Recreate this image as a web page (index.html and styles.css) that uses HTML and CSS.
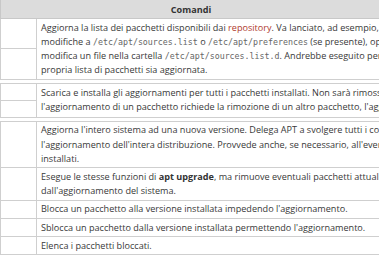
FILE: index.html
```html
<!DOCTYPE html>
<html lang="it">
<head>
<meta charset="utf-8">
<link rel="stylesheet" href="styles.css">
</head>
<body>
<table class="cmds">
  <colgroup><col class="c-cmd"><col class="c-desc"></colgroup>
  <tr><th colspan="2">Comandi</th></tr>
  <tr><td class="cmd"></td><td class="desc" rowspan="2">Aggiorna la lista dei pacchetti disponibili dai <a href="#">repository</a>. Va lanciato, ad esempio, dopo aver apportato<br>modifiche a <code>/etc/apt/sources.list</code> o <code>/etc/apt/preferences</code> (se presente), oppure dopo aver aggiunto o<br>modifica un file nella cartella <code>/etc/apt/sources.list.d</code>. Andrebbe eseguito periodicamente per far sì che la<br>propria lista di pacchetti sia aggiornata.</td></tr>
  <tr><td class="cmd"></td></tr>
  <tr class="gap"><td colspan="2"></td></tr>
  <tr><td class="cmd tall"></td><td class="desc" rowspan="2">Scarica e installa gli aggiornamenti per tutti i pacchetti installati. Non sarà rimosso alcun pacchetto: se<br>l'aggiornamento di un pacchetto richiede la rimozione di un altro pacchetto, l'aggiornamento non sarà eseguito.</td></tr>
  <tr><td class="cmd tall"></td></tr>
  <tr class="gap"><td colspan="2"></td></tr>
  <tr><td class="cmd"></td><td class="desc">Aggiorna l'intero sistema ad una nuova versione. Delega APT a svolgere tutti i compiti necessari per<br>l'aggiornamento dell'intera distribuzione. Provvede anche, se necessario, all'eventuale rimozione di pacchetti<br>installati.</td></tr>
  <tr><td class="cmd"></td><td class="desc">Esegue le stesse funzioni di <b>apt upgrade</b>, ma rimuove eventuali pacchetti attualmente installati se necessario<br>dall'aggiornamento del sistema.</td></tr>
  <tr><td class="cmd"></td><td class="desc">Blocca un pacchetto alla versione installata impedendo l'aggiornamento.</td></tr>
  <tr><td class="cmd"></td><td class="desc">Sblocca un pacchetto dalla versione installata permettendo l'aggiornamento.</td></tr>
  <tr><td class="cmd"></td><td class="desc">Elenca i pacchetti bloccati.</td></tr>
</table>
</body>
</html>
```

FILE: styles.css
```css
html, body {
  margin: 0;
  padding: 0;
  background: #fff;
  overflow: hidden;
}
body {
  font-family: "Open Sans", "Noto Sans", sans-serif;
  font-size: 9.1px;
  color: #383838;
}
.cmds {
  border-collapse: collapse;
  table-layout: fixed;
  width: 382px;
}
.c-cmd { width: 36px; }
.cmds th {
  background: #dcdcdc;
  font-weight: bold;
  text-align: center;
  height: 18px;
  padding: 0;
  border: 1px solid #c8c8c8;
  border-top: none;
  color: #333;
}
.cmds td {
  border: 1px solid #cfcfcf;
  padding: 1.5px 4px;
  line-height: 14.2px;
  vertical-align: middle;
  white-space: nowrap;
}
.cmds td.cmd { background: #fff; }
.cmds td.tall { height: 13px; }
.cmds .gap td {
  height: 3px;
  padding: 0;
  line-height: 0;
  border-left: none;
  border-right: none;
}
a { color: #b03a2e; text-decoration: none; }
code {
  font-family: "DejaVu Sans Mono", monospace;
  font-size: 8.3px;
  color: #666;
}
b { color: #333; }
```
